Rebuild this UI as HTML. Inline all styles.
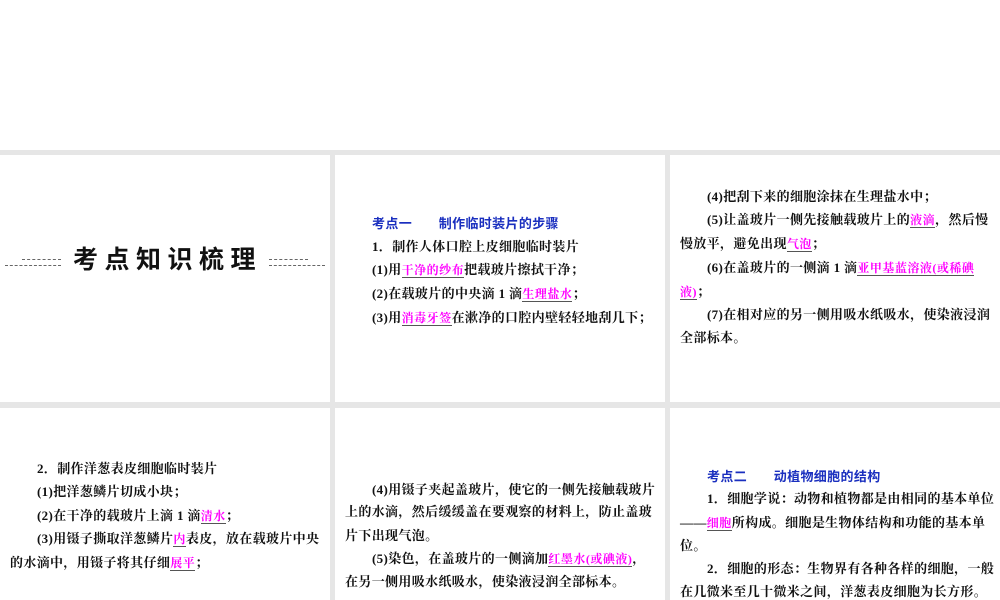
<!DOCTYPE html>
<html><head><meta charset="utf-8"><style>
body{margin:0;width:1000px;height:600px;overflow:hidden;background:#fff;position:relative;font-family:"Liberation Serif","Noto Serif CJK SC",serif;}
.bg{position:absolute;left:0;top:150px;width:1000px;height:450px;background:#e6e6e6;}
.p{position:absolute;background:#fff;}
.l{position:absolute;white-space:nowrap;font-size:13px;line-height:16px;color:#111;font-weight:bold;letter-spacing:0.35px;}
.m{color:#ff00ff;font-size:12px;border-bottom:1px solid #555;letter-spacing:0.5px;}
.b{color:#1a2fbf;font-family:"Liberation Sans","Noto Sans CJK SC",sans-serif;}
.d{position:absolute;border-top:1px dashed #666;height:0;}
</style></head><body>
<div class="bg"></div>
<div class="p" style="left:0;top:155px;width:330px;height:247px"></div>
<div class="p" style="left:335px;top:155px;width:330px;height:247px"></div>
<div class="p" style="left:670px;top:155px;width:330px;height:247px"></div>
<div class="p" style="left:0;top:408px;width:330px;height:192px"></div>
<div class="p" style="left:335px;top:408px;width:330px;height:192px"></div>
<div class="p" style="left:670px;top:408px;width:330px;height:192px"></div>

<div class="d" style="left:5px;top:265px;width:56px"></div>
<div class="d" style="left:22px;top:259px;width:39px"></div>
<div class="d" style="left:269px;top:265px;width:56px"></div>
<div class="d" style="left:269px;top:259px;width:39px"></div>
<div style="position:absolute;left:73px;top:244px;font:bold 25px 'Liberation Sans','Noto Sans CJK SC',sans-serif;letter-spacing:6.5px;color:#111;line-height:32px">考点知识梳理</div>

<div class="l b" style="left:372px;top:216px">考点一　　制作临时装片的步骤</div>
<div class="l" style="left:372px;top:239px">1．制作人体口腔上皮细胞临时装片</div>
<div class="l" style="left:372px;top:262px">(1)用<span class="m">干净的纱布</span>把载玻片擦拭干净；</div>
<div class="l" style="left:372px;top:286px">(2)在载玻片的中央滴 1 滴<span class="m">生理盐水</span>；</div>
<div class="l" style="left:372px;top:310px">(3)用<span class="m">消毒牙签</span>在漱净的口腔内壁轻轻地刮几下；</div>

<div class="l" style="left:707px;top:189px">(4)把刮下来的细胞涂抹在生理盐水中；</div>
<div class="l" style="left:707px;top:212px">(5)让盖玻片一侧先接触载玻片上的<span class="m">液滴</span>，然后慢</div>
<div class="l" style="left:680px;top:236px">慢放平，避免出现<span class="m">气泡</span>；</div>
<div class="l" style="left:707px;top:260px">(6)在盖玻片的一侧滴 1 滴<span class="m">亚甲基蓝溶液(或稀碘</span></div>
<div class="l" style="left:680px;top:284px"><span class="m">液)</span>；</div>
<div class="l" style="left:707px;top:307px">(7)在相对应的另一侧用吸水纸吸水，使染液浸润</div>
<div class="l" style="left:680px;top:330px">全部标本。</div>

<div class="l" style="left:37px;top:461px">2．制作洋葱表皮细胞临时装片</div>
<div class="l" style="left:37px;top:484px">(1)把洋葱鳞片切成小块；</div>
<div class="l" style="left:37px;top:508px">(2)在干净的载玻片上滴 1 滴<span class="m">清水</span>；</div>
<div class="l" style="left:37px;top:531px">(3)用镊子撕取洋葱鳞片<span class="m">内</span>表皮，放在载玻片中央</div>
<div class="l" style="left:10px;top:555px">的水滴中，用镊子将其仔细<span class="m">展平</span>；</div>

<div class="l" style="left:372px;top:482px">(4)用镊子夹起盖玻片，使它的一侧先接触载玻片</div>
<div class="l" style="left:345px;top:504px">上的水滴，然后缓缓盖在要观察的材料上，防止盖玻</div>
<div class="l" style="left:345px;top:528px">片下出现气泡。</div>
<div class="l" style="left:372px;top:551px">(5)染色，在盖玻片的一侧滴加<span class="m">红墨水(或碘液)</span>，</div>
<div class="l" style="left:345px;top:574px">在另一侧用吸水纸吸水，使染液浸润全部标本。</div>

<div class="l b" style="left:707px;top:469px">考点二　　动植物细胞的结构</div>
<div class="l" style="left:707px;top:491px">1．细胞学说：动物和植物都是由相同的基本单位</div>
<div class="l" style="left:680px;top:515px">——<span class="m">细胞</span>所构成。细胞是生物体结构和功能的基本单</div>
<div class="l" style="left:680px;top:538px">位。</div>
<div class="l" style="left:707px;top:561px">2．细胞的形态：生物界有各种各样的细胞，一般</div>
<div class="l" style="left:680px;top:584px">在几微米至几十微米之间，洋葱表皮细胞为长方形。</div>
</body></html>
